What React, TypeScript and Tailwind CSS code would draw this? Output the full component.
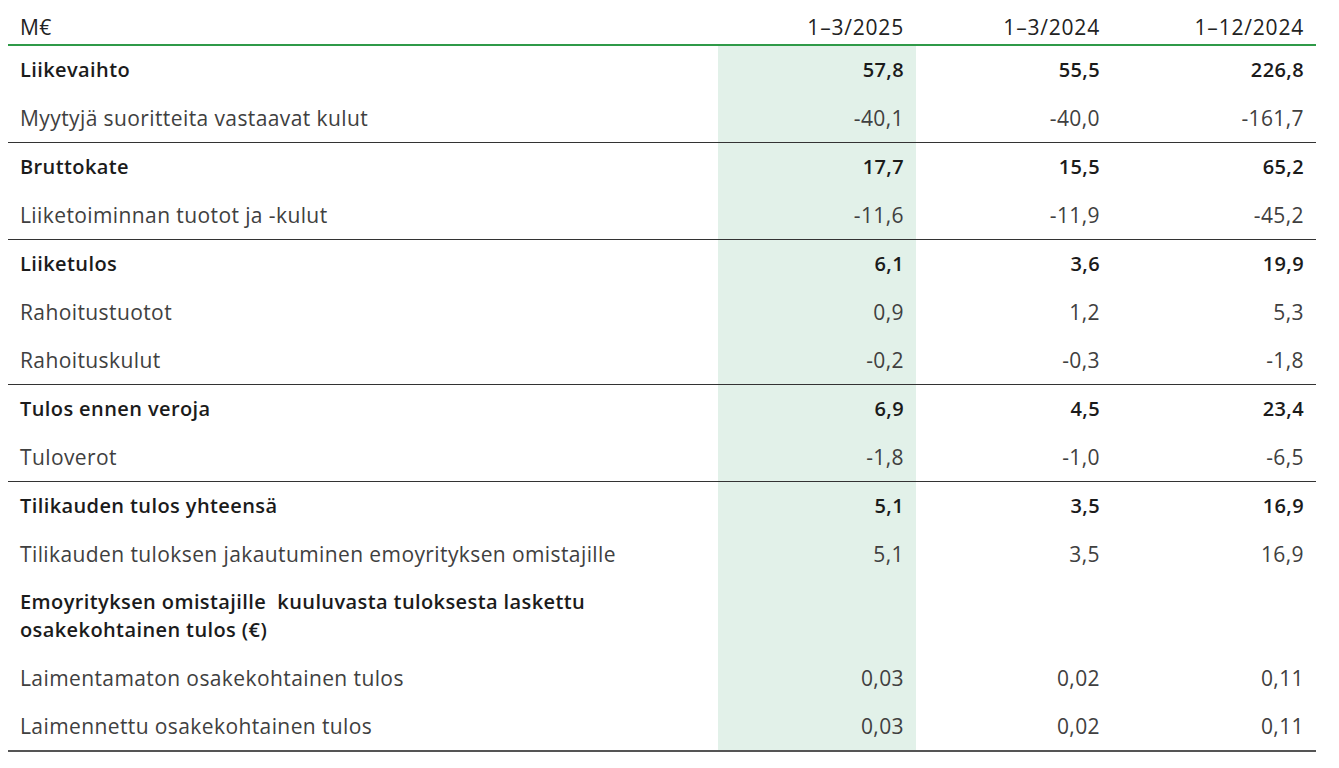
import React from "react";

type Row = {
  label: React.ReactNode;
  values: string[];
  bold?: boolean;
  line?: boolean;
};

const rows: Row[] = [
  { label: "Liikevaihto", values: ["57,8", "55,5", "226,8"], bold: true },
  { label: "Myytyjä suoritteita vastaavat kulut", values: ["-40,1", "-40,0", "-161,7"], line: true },
  { label: "Bruttokate", values: ["17,7", "15,5", "65,2"], bold: true },
  { label: "Liiketoiminnan tuotot ja -kulut", values: ["-11,6", "-11,9", "-45,2"], line: true },
  { label: "Liiketulos", values: ["6,1", "3,6", "19,9"], bold: true },
  { label: "Rahoitustuotot", values: ["0,9", "1,2", "5,3"] },
  { label: "Rahoituskulut", values: ["-0,2", "-0,3", "-1,8"], line: true },
  { label: "Tulos ennen veroja", values: ["6,9", "4,5", "23,4"], bold: true },
  { label: "Tuloverot", values: ["-1,8", "-1,0", "-6,5"], line: true },
  { label: "Tilikauden tulos yhteensä", values: ["5,1", "3,5", "16,9"], bold: true },
  { label: "Tilikauden tuloksen jakautuminen emoyrityksen omistajille", values: ["5,1", "3,5", "16,9"] },
  {
    label: (
      <>
        Emoyrityksen omistajille&nbsp; kuuluvasta tuloksesta laskettu
        <br />
        osakekohtainen tulos (€)
      </>
    ),
    values: ["", "", ""],
    bold: true,
  },
  { label: "Laimentamaton osakekohtainen tulos", values: ["0,03", "0,02", "0,11"] },
  { label: "Laimennettu osakekohtainen tulos", values: ["0,03", "0,02", "0,11"] },
];

const widths = ["w-[198px]", "w-[196px]", "w-[204px]"];

export default function App() {
  return (
    <div className="bg-white w-[1339px] h-[768px] pl-2 pr-[23px]" style={{ fontFamily: '"Open Sans", "Noto Sans", sans-serif' }}>
      <table className="w-full border-collapse leading-[28px]">
        <thead>
          <tr className="border-b-2 border-[#2f9a48]">
            <th className="pt-[13px] pb-[3px] pl-3 text-left font-normal text-[21px] tracking-[0.4px] text-[#222]">M€</th>
            {["1–3/2025", "1–3/2024", "1–12/2024"].map((h, i) => (
              <th
                key={h}
                className={`${widths[i]} pt-[13px] pb-[3px] pr-3 text-right font-normal text-[21px] tracking-[0.8px] text-[#222]`}
              >
                {h}
              </th>
            ))}
          </tr>
        </thead>
        <tbody>
          {rows.map((row, idx) => {
            const last = idx === rows.length - 1;
            const text = row.bold
              ? "font-semibold text-[20px] tracking-[0.4px] text-[#1b1b1b]"
              : "font-normal text-[21px] tracking-[0.4px] text-[#404040]";
            return (
              <tr
                key={idx}
                className={last ? "border-b-2 border-[#555]" : row.line ? "border-b border-[#333]" : ""}
              >
                <td className={`pl-3 py-[10px] align-top ${text}`}>{row.label}</td>
                {row.values.map((v, i) => (
                  <td
                    key={i}
                    className={`${widths[i]} pr-3 py-[10px] text-right align-top ${
                      i === 0 ? "bg-[#e2f1e9]" : ""
                    } ${text}`}
                  >
                    {v}
                  </td>
                ))}
              </tr>
            );
          })}
        </tbody>
      </table>
    </div>
  );
}
